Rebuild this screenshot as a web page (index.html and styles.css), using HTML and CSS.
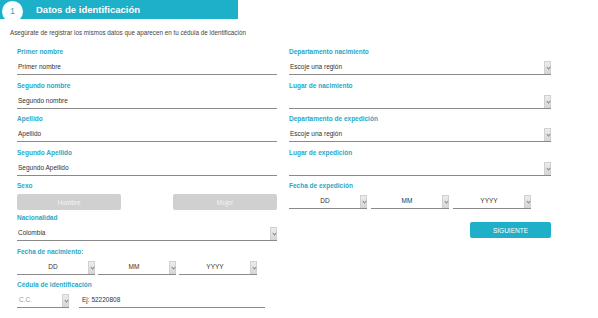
FILE: index.html
```html
<!DOCTYPE html>
<html lang="es">
<head>
    <meta charset="UTF-8">
    <title>Datos de identificación</title>
    <link rel="stylesheet" href="styles.css">
</head>
<body>
    <header class="step-header">
        <div class="step-bar">
            <span class="step-num">1</span>
            <h1>Datos de identificación</h1>
        </div>
    </header>

    <p class="intro">Asegúrate de registrar los mismos datos que aparecen en tu cédula de identificación</p>

    <div class="form">
        <!-- columna izquierda -->
        <div class="col col-left">
            <div class="field">
                <label class="lbl">Primer nombre</label>
                <div class="line"><span class="val">Primer nombre</span></div>
            </div>
            <div class="field">
                <label class="lbl">Segundo nombre</label>
                <div class="line"><span class="val">Segundo nombre</span></div>
            </div>
            <div class="field">
                <label class="lbl">Apellido</label>
                <div class="line"><span class="val">Apellido</span></div>
            </div>
            <div class="field">
                <label class="lbl">Segundo Apellido</label>
                <div class="line"><span class="val">Segundo Apellido</span></div>
            </div>
            <div class="field field-sexo">
                <label class="lbl">Sexo</label>
                <div class="sexo">
                    <button class="sexo-btn">Hombre</button>
                    <button class="sexo-btn">Mujer</button>
                </div>
            </div>
            <div class="field">
                <label class="lbl">Nacionalidad</label>
                <div class="line sel"><span class="val">Colombia</span><span class="arrow"></span></div>
            </div>
            <div class="field">
                <label class="lbl">Fecha de nacimiento:</label>
                <div class="dates">
                    <div class="line sel date"><span class="val">DD</span><span class="arrow"></span></div>
                    <div class="line sel date"><span class="val">MM</span><span class="arrow"></span></div>
                    <div class="line sel date"><span class="val">YYYY</span><span class="arrow"></span></div>
                </div>
            </div>
            <div class="field">
                <label class="lbl">Cédula de identificación</label>
                <div class="cedula">
                    <div class="line sel doc-type"><span class="val muted">C.C.</span><span class="arrow"></span></div>
                    <div class="line doc-num"><span class="val">Ej: 52220808</span></div>
                </div>
            </div>
        </div>

        <!-- columna derecha -->
        <div class="col col-right">
            <div class="field">
                <label class="lbl">Departamento nacimiento</label>
                <div class="line sel"><span class="val">Escoje una región</span><span class="arrow"></span></div>
            </div>
            <div class="field">
                <label class="lbl">Lugar de nacimiento</label>
                <div class="line sel"><span class="val"></span><span class="arrow"></span></div>
            </div>
            <div class="field">
                <label class="lbl">Departamento de expedición</label>
                <div class="line sel"><span class="val">Escoje una región</span><span class="arrow"></span></div>
            </div>
            <div class="field">
                <label class="lbl">Lugar de expedición</label>
                <div class="line sel"><span class="val"></span><span class="arrow"></span></div>
            </div>
            <div class="field">
                <label class="lbl">Fecha de expedición</label>
                <div class="dates">
                    <div class="line sel date"><span class="val">DD</span><span class="arrow"></span></div>
                    <div class="line sel date"><span class="val">MM</span><span class="arrow"></span></div>
                    <div class="line sel date"><span class="val">YYYY</span><span class="arrow"></span></div>
                </div>
            </div>
            <div class="actions">
                <button class="next-btn">SIGUIENTE</button>
            </div>
        </div>
    </div>
</body>
</html>
```

FILE: styles.css
```css
/* base */
body {
    margin: 0;
    font-family: "Liberation Sans", Arial, sans-serif;
    background: #fff;
    color: #333;
}

/* cabecera del paso */
.step-header {
    height: 19px;
}
.step-bar {
    width: 238px;
    height: 19px;
    background: #1eb0c8;
    display: flex;
    align-items: flex-start;
}
.step-num {
    width: 21px;
    height: 21px;
    margin: 1px 0 0 2px;
    border-radius: 50%;
    background: #fff;
    color: #1eb0c8;
    font-size: 9px;
    line-height: 21px;
    text-align: center;
    flex-shrink: 0;
}
.step-bar h1 {
    margin: 0 0 0 13px;
    color: #fff;
    font-size: 9.5px;
    font-weight: bold;
    line-height: 19px;
}

.intro {
    margin: 9px 0 0 10px;
    font-size: 6.3px;
    line-height: 10px;
    color: #444;
}

/* formulario en dos columnas */
.form {
    display: flex;
    gap: 12px;
    padding-left: 17px;
    margin-top: 9px;
}
.col-left {
    width: 260px;
}
.col-right {
    width: 262px;
}

.field {
    margin-bottom: 5.5px;
}
.lbl {
    display: block;
    height: 10px;
    line-height: 10px;
    margin-bottom: 3px;
    font-size: 6.5px;
    font-weight: bold;
    color: #2aa8c6;
}

.line {
    height: 14px;
    border-bottom: 1px solid #8a8a8a;
    display: flex;
    align-items: center;
}
.val {
    flex: 1;
    font-size: 6.5px;
    line-height: 14px;
    color: #333;
    padding-left: 1px;
    white-space: nowrap;
}
.val.muted {
    color: #9a9a9a;
    padding-left: 2px;
}

/* flechita del select */
.arrow {
    width: 7px;
    height: 13px;
    background: linear-gradient(#ececec, #d6d6d6);
    border: 1px solid #d0d0d0;
    border-bottom: none;
    box-sizing: border-box;
    position: relative;
    flex-shrink: 0;
    align-self: flex-end;
}
.arrow::after {
    content: "";
    position: absolute;
    left: 2px;
    top: 4px;
    width: 2px;
    height: 2px;
    border-right: 1px solid #888;
    border-bottom: 1px solid #888;
    transform: rotate(45deg);
}

/* sexo */
.field-sexo {
    margin-bottom: 3px;
}
.sexo {
    display: flex;
    justify-content: space-between;
}
.sexo-btn {
    width: 104px;
    height: 16px;
    border: none;
    border-radius: 2px;
    background: #d0d0d0;
    color: #f4f4f4;
    font-family: inherit;
    font-size: 6.5px;
    padding: 0;
}

/* fechas */
.dates {
    display: flex;
    gap: 3px;
}
.col-right .dates {
    gap: 4px;
}
.date {
    width: 78px;
}
.date .val {
    text-align: center;
}

/* cédula */
.cedula {
    display: flex;
    gap: 10px;
}
.doc-type {
    width: 52px;
}
.doc-num {
    width: 186px;
}
.doc-num .val {
    padding-left: 3px;
}

/* botón siguiente */
.actions {
    display: flex;
    justify-content: flex-end;
    margin-top: 13px;
}
.next-btn {
    width: 81px;
    height: 16px;
    border: none;
    border-radius: 2px;
    background: #1eb0c8;
    color: #fff;
    font-family: inherit;
    font-size: 6.5px;
    padding: 0;
}
```
